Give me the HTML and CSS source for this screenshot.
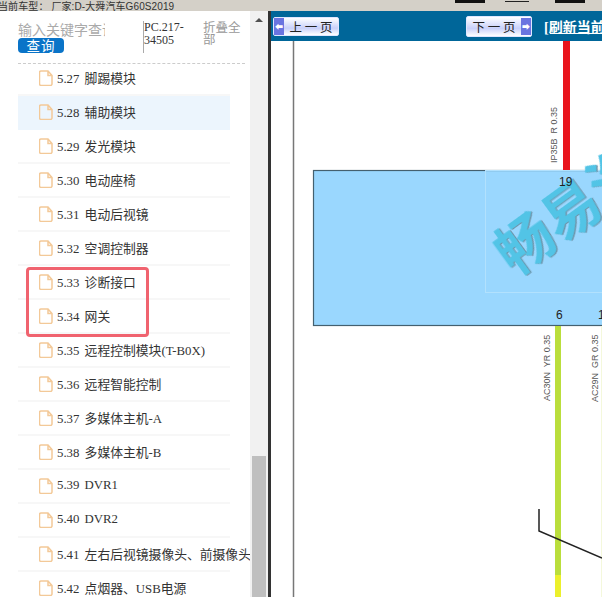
FILE: index.html
```html
<!DOCTYPE html>
<html lang="zh-CN">
<head>
    <meta charset="UTF-8">
    <meta name="viewport" content="width=device-width, initial-scale=1.0">
    <title>当前车型</title>
    <link rel="stylesheet" href="styles.css">
</head>
<body>
    <svg class="defs" width="0" height="0">
        <symbol id="file" viewBox="0 0 14 16">
            <path d="M2 1h7l4 4.500v8.500a1.500 1.500 0 0 1-1.500 1.500h-9.500a1.500 1.500 0 0 1-1.500-1.500v-11.500a1.500 1.500 0 0 1 1.500-1.500z M9 1v4.500h4" fill="none" stroke="#f3c998" stroke-width="1.500"/>
        </symbol>
    </svg>

    <div class="topbar">
        <span class="car-info">当前车型： 厂家:D-大舜汽车G60S2019</span>
        <span class="top-btn top-btn-a"></span>
        <span class="top-line"></span>
        <span class="top-btn top-btn-b"></span>
    </div>

    <div class="main">
        <div class="sidebar">
            <div class="sidebar-inner">
                <div class="search">
                    <div class="search-box">
                        <input class="search-input" type="text" placeholder="输入关键字查询">
                        <button class="search-btn" type="button">查询</button>
                    </div>
                    <div class="doc-code">PC.217-34505</div>
                    <div class="collapse">折叠全部</div>
                </div>
                <ul class="tree">
                    <li><svg class="file"><use href="#file"/></svg><span>5.27 脚踢模块</span></li>
                    <li class="current"><svg class="file"><use href="#file"/></svg><span>5.28 辅助模块</span></li>
                    <li><svg class="file"><use href="#file"/></svg><span>5.29 发光模块</span></li>
                    <li><svg class="file"><use href="#file"/></svg><span>5.30 电动座椅</span></li>
                    <li><svg class="file"><use href="#file"/></svg><span>5.31 电动后视镜</span></li>
                    <li><svg class="file"><use href="#file"/></svg><span>5.32 空调控制器</span></li>
                    <li><svg class="file"><use href="#file"/></svg><span>5.33 诊断接口</span></li>
                    <li><svg class="file"><use href="#file"/></svg><span>5.34 网关</span></li>
                    <li><svg class="file"><use href="#file"/></svg><span>5.35 远程控制模块(T-B0X)</span></li>
                    <li><svg class="file"><use href="#file"/></svg><span>5.36 远程智能控制</span></li>
                    <li><svg class="file"><use href="#file"/></svg><span>5.37 多媒体主机-A</span></li>
                    <li><svg class="file"><use href="#file"/></svg><span>5.38 多媒体主机-B</span></li>
                    <li><svg class="file"><use href="#file"/></svg><span>5.39 DVR1</span></li>
                    <li><svg class="file"><use href="#file"/></svg><span>5.40 DVR2</span></li>
                    <li><svg class="file"><use href="#file"/></svg><span>5.41 左右后视镜摄像头、前摄像头</span></li>
                    <li><svg class="file"><use href="#file"/></svg><span>5.42 点烟器、USB电源</span></li>
                </ul>
                <div class="mark"></div>
            </div>
            <div class="scrollbar">
                <div class="scroll-up"></div>
                <div class="scroll-thumb"></div>
            </div>
        </div>

        <div class="viewer">
            <div class="toolbar">
                <button class="page-btn prev" type="button"><span class="arrow">&#x2B05;</span><span class="page-label">上 一 页</span></button>
                <button class="page-btn next" type="button"><span class="page-label">下 一 页</span><span class="arrow">&#x27A1;</span></button>
                <a class="refresh" href="#">[刷新当前页面]</a>
            </div>
            <svg class="diagram" viewBox="271 41 331 556" width="331" height="556">
                <line x1="293.500" y1="41" x2="293.500" y2="597" stroke="#777" stroke-width="1.500"/>
                <rect x="313.500" y="170.500" width="300" height="155" fill="#9ad7fe" stroke="#44606f" stroke-width="1.200"/>
                <rect x="485.500" y="170.500" width="130" height="122" fill="none" stroke="#b2e1fd"/>
                <rect x="563" y="41" width="7" height="129" fill="#e9141c"/>
                <rect x="555" y="326" width="6" height="249" fill="#bade3c"/>
                <rect x="555" y="575" width="6" height="22" fill="#ecf02c"/>
                <rect x="601" y="326" width="1" height="271" fill="#f4f8dc"/>
                <polyline points="539,509 539,531 602,558" fill="none" stroke="#222" stroke-width="1.500"/>
                <text class="watermark" transform="translate(514 277) rotate(-36)">畅易汽</text>
                <text class="pin" x="559" y="186">19</text>
                <text class="pin" x="556" y="319">6</text>
                <text class="pin" x="598" y="319">1</text>
                <text class="wire-label" transform="translate(557 163) rotate(-90)">IP35B  R 0.35</text>
                <text class="wire-label" transform="translate(550 401) rotate(-90)">AC30N  YR 0.35</text>
                <text class="wire-label" transform="translate(598 402) rotate(-90)">AC29N  GR 0.35</text>
            </svg>
        </div>
    </div>
</body>
</html>
```

FILE: styles.css
```css
html, body {
    height: 100%;
}
body {
    margin: 0;
    display: flex;
    flex-direction: column;
    overflow: hidden;
    background: #fff;
    color: #333;
    font-family: "Liberation Serif", "Noto Sans CJK SC", serif;
}
.defs {
    position: absolute;
}
.topbar {
    position: relative;
    flex: none;
    height: 11px;
    overflow: hidden;
    background: #d4d0c8;
}
.car-info {
    position: absolute;
    left: -2px;
    top: 0;
    font-family: "Liberation Sans", "Noto Sans CJK SC", sans-serif;
    font-size: 10px;
    line-height: 14px;
    letter-spacing: 0.100px;
    color: #333;
    white-space: nowrap;
}
.top-btn {
    position: absolute;
    top: 0;
    width: 30px;
    height: 3px;
    background: #111;
}
.top-btn-a {
    left: 455px;
}
.top-btn-b {
    left: 555px;
}
.top-line {
    position: absolute;
    left: 505px;
    top: 1px;
    width: 24px;
    height: 1px;
    background: #222;
}
.main {
    flex: 1;
    display: flex;
    min-height: 0;
}
.sidebar {
    flex: none;
    display: flex;
    width: 268px;
}
.sidebar-inner {
    position: relative;
    width: 250px;
    overflow: hidden;
}
.search {
    display: flex;
    height: 53px;
    margin: 0 5px 0 18px;
    border-bottom: 1px dashed #ccc;
    box-sizing: border-box;
    padding-top: 9px;
}
.search-box {
    width: 125px;
}
.search-input {
    display: block;
    width: 87px;
    height: 18px;
    margin: 0;
    padding: 0;
    border: 0;
    outline: 0;
    font-family: "Noto Sans CJK SC", sans-serif;
    font-size: 14px;
}
.search-input::placeholder {
    color: #aaa;
}
.search-btn {
    display: block;
    width: 46px;
    height: 15px;
    padding: 0;
    border: 0;
    border-radius: 4px;
    background: #0a74c8;
    color: #fff;
    font-family: "Noto Sans CJK SC", sans-serif;
    font-size: 13.500px;
    line-height: 15px;
    letter-spacing: 1px;
}
.doc-code {
    width: 59px;
    height: 32px;
    margin-top: 1px;
    box-sizing: content-box;
    border-left: 1px solid #aaa;
    font-size: 12px;
    line-height: 13px;
    color: #333;
}
.collapse {
    width: 38px;
    margin-top: 1px;
    font-family: "Noto Sans CJK SC", sans-serif;
    font-size: 12.500px;
    line-height: 12px;
    color: #999;
}
.tree {
    margin: 0 0 0 18px;
    padding: 0;
    list-style: none;
}
.tree li {
    display: flex;
    align-items: center;
    box-sizing: border-box;
    width: 212px;
    height: 34px;
    padding: 0 0 1px 21px;
    border-bottom: 2px solid #f7f7f7;
    font-size: 12.800px;
    word-spacing: 2px;
    white-space: nowrap;
}
.tree li:first-child {
    height: 32px;
    padding-bottom: 3px;
}
.tree li.current {
    background: #ecf5fd;
    border-bottom-color: #ecf5fd;
}
.file {
    flex: none;
    width: 14px;
    height: 16px;
    margin-right: 4px;
}
.mark {
    position: absolute;
    left: 26px;
    top: 256px;
    width: 117px;
    height: 64px;
    border: 3px solid #f0636f;
    border-radius: 4px;
}
.scrollbar {
    position: relative;
    flex: none;
    width: 18px;
    background: #f1f1f1;
}
.scroll-up {
    position: absolute;
    left: 5px;
    top: 7px;
    border-left: 4px solid transparent;
    border-right: 4px solid transparent;
    border-bottom: 4px solid #505050;
}
.scroll-thumb {
    position: absolute;
    left: 2px;
    right: 2px;
    top: 445px;
    bottom: 0;
    background: #bfbfbf;
}
.viewer {
    flex: 1;
    display: flex;
    flex-direction: column;
    min-width: 0;
    overflow: hidden;
    border-left: 3px solid #333;
}
.toolbar {
    flex: none;
    display: flex;
    align-items: center;
    height: 30px;
    padding-left: 2px;
    background: #006699;
    white-space: nowrap;
}
.page-btn {
    display: flex;
    align-items: center;
    justify-content: space-between;
    box-sizing: border-box;
    flex: none;
    width: 66px;
    height: 19px;
    padding: 0;
    border: 1px solid #dfe6ff;
    border-radius: 2px;
    background: linear-gradient(#fff, #c8d0fa 60%, #fff);
    color: #222;
    font-family: "Noto Sans CJK SC", sans-serif;
    font-size: 12.500px;
}
.page-label {
    flex: 1;
    text-align: center;
}
.arrow {
    width: 10px;
    height: 17px;
    background: #6a74e0;
    color: #fff;
    font-size: 8px;
    line-height: 17px;
}
.next {
    margin-left: 127px;
    height: 21px;
}
.refresh {
    margin-left: 12px;
    color: #fff;
    font-size: 14px;
    font-weight: bold;
}
.diagram {
    display: block;
    flex: none;
    font-family: "Liberation Sans", sans-serif;
}
.watermark {
    font-family: "Noto Sans CJK SC", sans-serif;
    font-size: 57px;
    font-weight: 700;
    fill: #52c4e6;
    filter: drop-shadow(1px 1px 0 #6f93a8);
}
.pin {
    font-size: 12px;
    fill: #222;
}
.wire-label {
    font-size: 9px;
    fill: #555;
    white-space: pre;
}
```
